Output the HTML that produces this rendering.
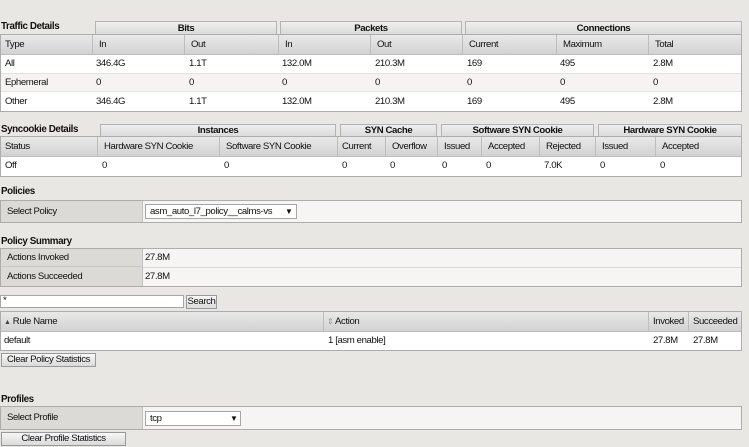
<!DOCTYPE html>
<html><head><meta charset="utf-8"><style>
body{margin:0;width:749px;height:447px;background:#e9e7e3;font-family:"Liberation Sans",sans-serif;font-size:9.6px;letter-spacing:-0.4px;color:#111;position:relative;overflow:hidden}
.a{position:absolute;box-sizing:border-box;white-space:nowrap}
.t{font-weight:bold;font-size:9.8px}
.g{background:linear-gradient(#efefef,#d9d9d9);border:1px solid #b3b3b3;border-bottom:none;font-weight:bold;text-align:center;line-height:13px}
.fr{border:1px solid #adadad;background:#fff}
.h{background:linear-gradient(#e9e9e9,#d2d2d2);border-right:1px solid #bdbdbd;border-bottom:1px solid #bdbdbd;padding-left:6px;line-height:19px}
.c{padding-left:6px;line-height:19px}
.lab{background:#dcdad6;border-right:1px solid #c2c2c2;padding-left:6px;line-height:21px}
.sel{background:#fff;border:1px solid #a5a5a5;padding-left:4px;line-height:13px}
.btn{background:linear-gradient(#f7f7f7,#dadada);border:1px solid #999;text-align:center;line-height:12px}
</style></head><body>

<div class="a t" style="left:1px;top:21px">Traffic Details</div>
<div class="a g" style="left:95px;top:21px;width:182px;height:14px">Bits</div>
<div class="a g" style="left:280px;top:21px;width:182px;height:14px">Packets</div>
<div class="a g" style="left:465px;top:21px;width:277px;height:14px">Connections</div>
<div class="a fr" style="left:0;top:34px;width:742px;height:78px"></div>
<div class="a h" style="left:1px;top:35px;width:92px;height:20px;padding-left:4px">Type</div>
<div class="a h" style="left:93px;top:35px;width:92px;height:20px">In</div>
<div class="a h" style="left:185px;top:35px;width:94px;height:20px">Out</div>
<div class="a h" style="left:279px;top:35px;width:92px;height:20px">In</div>
<div class="a h" style="left:371px;top:35px;width:92px;height:20px">Out</div>
<div class="a h" style="left:463px;top:35px;width:94px;height:20px">Current</div>
<div class="a h" style="left:557px;top:35px;width:92px;height:20px">Maximum</div>
<div class="a h" style="left:649px;top:35px;width:92px;height:20px;border-right:none">Total</div>
<div class="a" style="left:1px;top:73px;width:740px;height:19px;background:#f5f4f2;border-top:1px solid #e2e2e2;border-bottom:1px solid #e2e2e2"></div>
<div class="a c" style="left:-1px;top:54px">All</div><div class="a c" style="left:90px;top:54px">346.4G</div><div class="a c" style="left:183px;top:54px">1.1T</div><div class="a c" style="left:276px;top:54px">132.0M</div><div class="a c" style="left:369px;top:54px">210.3M</div><div class="a c" style="left:461px;top:54px">169</div><div class="a c" style="left:554px;top:54px">495</div><div class="a c" style="left:647px;top:54px">2.8M</div>
<div class="a c" style="left:-1px;top:73px">Ephemeral</div><div class="a c" style="left:90px;top:73px">0</div><div class="a c" style="left:183px;top:73px">0</div><div class="a c" style="left:276px;top:73px">0</div><div class="a c" style="left:369px;top:73px">0</div><div class="a c" style="left:461px;top:73px">0</div><div class="a c" style="left:554px;top:73px">0</div><div class="a c" style="left:647px;top:73px">0</div>
<div class="a c" style="left:-1px;top:92px">Other</div><div class="a c" style="left:90px;top:92px">346.4G</div><div class="a c" style="left:183px;top:92px">1.1T</div><div class="a c" style="left:276px;top:92px">132.0M</div><div class="a c" style="left:369px;top:92px">210.3M</div><div class="a c" style="left:461px;top:92px">169</div><div class="a c" style="left:554px;top:92px">495</div><div class="a c" style="left:647px;top:92px">2.8M</div>

<div class="a t" style="left:1px;top:124px">Syncookie Details</div>
<div class="a g" style="left:100px;top:124px;width:236px;height:13px;line-height:12px">Instances</div>
<div class="a g" style="left:340px;top:124px;width:97px;height:13px;line-height:12px">SYN Cache</div>
<div class="a g" style="left:441px;top:124px;width:153px;height:13px;line-height:12px">Software SYN Cookie</div>
<div class="a g" style="left:598px;top:124px;width:144px;height:13px;line-height:12px">Hardware SYN Cookie</div>
<div class="a fr" style="left:0;top:136px;width:742px;height:41px"></div>
<div class="a h" style="left:1px;top:137px;width:97px;height:20px;padding-left:4px">Status</div>
<div class="a h" style="left:98px;top:137px;width:122px;height:20px">Hardware SYN Cookie</div>
<div class="a h" style="left:220px;top:137px;width:118px;height:20px">Software SYN Cookie</div>
<div class="a h" style="left:338px;top:137px;width:48px;height:20px;padding-left:4px">Current</div>
<div class="a h" style="left:386px;top:137px;width:52px;height:20px">Overflow</div>
<div class="a h" style="left:438px;top:137px;width:44px;height:20px">Issued</div>
<div class="a h" style="left:482px;top:137px;width:58px;height:20px">Accepted</div>
<div class="a h" style="left:540px;top:137px;width:56px;height:20px">Rejected</div>
<div class="a h" style="left:596px;top:137px;width:60px;height:20px">Issued</div>
<div class="a h" style="left:656px;top:137px;width:85px;height:20px;border-right:none">Accepted</div>
<div class="a c" style="left:-1px;top:156px">Off</div><div class="a c" style="left:96px;top:156px">0</div><div class="a c" style="left:218px;top:156px">0</div><div class="a c" style="left:336px;top:156px">0</div><div class="a c" style="left:384px;top:156px">0</div><div class="a c" style="left:436px;top:156px">0</div><div class="a c" style="left:480px;top:156px">0</div><div class="a c" style="left:538px;top:156px">7.0K</div><div class="a c" style="left:594px;top:156px">0</div><div class="a c" style="left:654px;top:156px">0</div>

<div class="a t" style="left:1px;top:186px">Policies</div>
<div class="a fr" style="left:0;top:200px;width:742px;height:23px;background:#f6f5f3"></div>
<div class="a lab" style="left:1px;top:201px;width:142px;height:21px">Select Policy</div>
<div class="a sel" style="left:145px;top:204px;width:152px;height:15px">asm_auto_l7_policy__calms-vs<span style="position:absolute;left:139px;font-size:8px">▼</span></div>

<div class="a t" style="left:1px;top:236px">Policy Summary</div>
<div class="a fr" style="left:0;top:248px;width:742px;height:39px;background:#f6f5f3"></div>
<div class="a lab" style="left:1px;top:249px;width:142px;height:18px;line-height:18px;border-bottom:1px solid #c8c8c8">Actions Invoked</div>
<div class="a lab" style="left:1px;top:267px;width:142px;height:19px;line-height:19px">Actions Succeeded</div>
<div class="a c" style="left:139px;top:249px;line-height:18px">27.8M</div>
<div class="a c" style="left:139px;top:267px">27.8M</div>
<div class="a" style="left:143px;top:267px;width:598px;border-top:1px solid #d8d8d8"></div>

<div class="a" style="left:0;top:295px;width:184px;height:13px;background:#fff;border:1px solid #a5a5a5;line-height:9px;padding-left:2px">*</div>
<div class="a btn" style="left:186px;top:295px;width:31px;height:14px">Search</div>

<div class="a fr" style="left:0;top:311px;width:742px;height:40px"></div>
<div class="a h" style="left:1px;top:312px;width:323px;height:20px;padding-left:3px"><span style="font-size:7px;color:#444">▲</span> Rule Name</div>
<div class="a h" style="left:324px;top:312px;width:325px;height:20px;padding-left:3px"><span style="font-size:8px;color:#999">⇕</span> Action</div>
<div class="a h" style="left:649px;top:312px;width:40px;height:20px;padding-left:4px">Invoked</div>
<div class="a h" style="left:689px;top:312px;width:52px;height:20px;border-right:none;padding-left:4px">Succeeded</div>
<div class="a c" style="left:-2px;top:331px">default</div>
<div class="a c" style="left:322px;top:331px">1 [asm enable]</div>
<div class="a c" style="left:647px;top:331px">27.8M</div>
<div class="a c" style="left:687px;top:331px">27.8M</div>
<div class="a btn" style="left:1px;top:353px;width:95px;height:14px">Clear Policy Statistics</div>

<div class="a t" style="left:1px;top:394px">Profiles</div>
<div class="a fr" style="left:0;top:406px;width:742px;height:24px;background:#f6f5f3"></div>
<div class="a lab" style="left:1px;top:407px;width:142px;height:22px;line-height:22px">Select Profile</div>
<div class="a sel" style="left:145px;top:411px;width:96px;height:15px">tcp<span style="position:absolute;left:84px;font-size:8px">▼</span></div>
<div class="a btn" style="left:1px;top:432px;width:125px;height:14px">Clear Profile Statistics</div>
</body></html>
